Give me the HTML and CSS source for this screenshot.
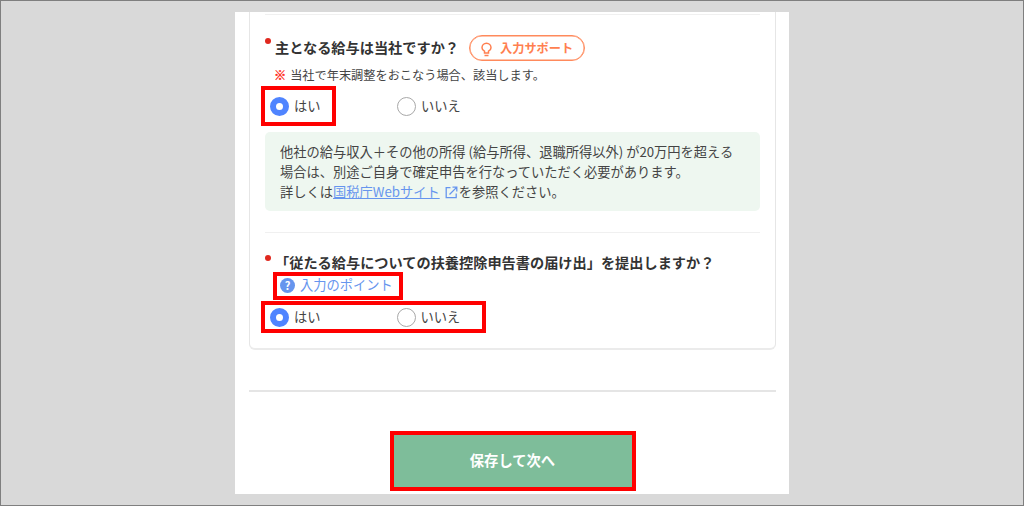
FILE: index.html
```html
<!DOCTYPE html>
<html lang="ja">

<head>
    <meta charset="UTF-8">
    <meta name="viewport" content="width=device-width, initial-scale=1.0">
    <title>年末調整</title>
    <link rel="stylesheet" href="styles.css">
</head>

<body>
    <main class="panel">
        <form id="salary-form">
            <section class="card">
                <hr class="divider first">

                <div class="question">
                    <span class="required"></span>
                    <h2>主となる給与は当社ですか？</h2>
                    <button type="button" class="support">
                        <svg width="11" height="15" viewBox="0 0 11 15" fill="none" stroke="currentColor" stroke-width="1.5">
                            <path d="M3.5 11V9.200C1.900 8.400 1 7.200 1 5.700a4.500 4.500 0 0 1 9 0c0 1.500-.9 2.700-2.500 3.500V11z" />
                            <path d="M3.500 13.500h4" />
                        </svg>
                        <span>入力サポート</span>
                    </button>
                </div>
                <p class="note"><span class="mark">※</span>当社で年末調整をおこなう場合、該当します。</p>
                <div class="radio-row">
                    <div class="highlight yes-only">
                        <label class="radio"><input type="radio" name="main" checked>はい</label>
                    </div>
                    <label class="radio"><input type="radio" name="main">いいえ</label>
                </div>

                <div class="info">
                    <p>他社の給与収入＋その他の所得 (給与所得、退職所得以外) が20万円を超える</p>
                    <p>場合は、別途ご自身で確定申告を行なっていただく必要があります。</p>
                    <p>詳しくは<a href="#">国税庁Webサイト</a><svg class="external" width="13" height="13" viewBox="0 0 13 13" fill="none" stroke="currentColor" stroke-width="1.300"><path d="M5.500 1.700H1.200v10h10V7.500M7.500 1.200h4.300v4.300M11.600 1.400L4.500 8.500" /></svg>を参照ください。</p>
                </div>

                <hr class="divider">

                <div class="question second">
                    <span class="required"></span>
                    <h2>「従たる給与についての扶養控除申告書の届け出」を提出しますか？</h2>
                </div>
                <div class="highlight point">
                    <span class="help">?</span>
                    <a href="#">入力のポイント</a>
                </div>
                <div class="highlight both">
                    <label class="radio"><input type="radio" name="sub" checked>はい</label>
                    <label class="radio"><input type="radio" name="sub">いいえ</label>
                </div>
            </section>

            <hr class="separator">

            <div class="highlight save">
                <button type="submit">保存して次へ</button>
            </div>
        </form>
    </main>
</body>

</html>
```

FILE: styles.css
```css
* {
    margin: 0;
    padding: 0;
    box-sizing: border-box;
}

body {
    height: 100vh;
    padding: 11px 0 0 234px;
    border: 1px solid #7f7f7f;
    background-color: #d9d9d9;
    color: #444444;
    font-family: 'Noto Sans CJK JP', sans-serif;
    font-size: 13.25px;
    overflow: hidden;
}

button,
input {
    font-family: inherit;
}

.panel {
    width: 554px;
    height: 482px;
    padding: 0 13px 0 14px;
    background-color: #ffffff;
}

.card {
    height: 338px;
    padding: 2px 15px 0;
    border: 1px solid #e6e6e6;
    border-top: none;
    border-bottom: 2px solid #ebebeb;
    border-radius: 0 0 6px 6px;
}

.divider {
    height: 1px;
    margin-top: 21px;
    border: none;
    background-color: #f0f0f0;
}

.divider.first {
    margin-top: 0;
}

.question {
    display: flex;
    align-items: center;
    height: 26px;
    margin-top: 20px;
}

.question.second {
    height: 18px;
    margin-top: 21px;
}

.required {
    align-self: flex-start;
    width: 6px;
    height: 6px;
    margin: 3px 4px 0 0;
    border-radius: 50%;
    background-color: #e0281e;
}

.question.second .required {
    margin-top: 1px;
}

h2 {
    padding-bottom: 2px;
    color: #333333;
    font-size: 14.2px;
    line-height: 18px;
    white-space: nowrap;
}

.support {
    display: flex;
    align-items: center;
    gap: 8px;
    width: 116px;
    height: 26px;
    margin-left: 10px;
    padding-left: 11px;
    border: 1px solid #ff8a5c;
    border-radius: 13px;
    background-color: #ffffff;
    box-shadow: inset 0 0 0 0.5px #ff8a5c;
    color: #ff7f50;
    font-size: 12.2px;
    font-weight: bold;
    line-height: 18px;
    white-space: nowrap;
}

.support svg {
    margin-top: 3px;
}

.note {
    margin-top: 4px;
    padding-left: 9px;
    font-size: 12.2px;
    line-height: 20px;
}

.note .mark {
    margin-right: 4px;
    color: #ff2a1a;
    font-weight: bold;
    -webkit-text-stroke: 0.4px #ff2a1a;
}

.highlight {
    display: flex;
    align-items: center;
    border: 4px solid #ff0000;
}

.radio-row {
    display: flex;
    align-items: center;
    gap: 61px;
    height: 40px;
    margin: 1px 0 0 -4px;
}

.yes-only {
    width: 75px;
    height: 40px;
    padding-left: 5px;
}

.radio {
    display: flex;
    align-items: center;
    gap: 5px;
    line-height: 20px;
    white-space: nowrap;
}

.radio input {
    appearance: none;
    width: 19px;
    height: 19px;
    border: 1px solid #a8a8a8;
    border-radius: 50%;
    background-color: #ffffff;
}

.radio input:checked {
    border: 6px solid #4f84ff;
}

.info {
    height: 79px;
    margin-top: 6px;
    padding: 10px 15px;
    border-radius: 5px;
    background-color: #eef7f0;
    line-height: 20px;
    white-space: nowrap;
}

a {
    color: #6695ee;
}

.external {
    margin: 0 1px 0 5px;
    color: #6695ee;
    vertical-align: -2px;
}

.point {
    gap: 5px;
    width: 130px;
    height: 28px;
    margin-left: 8px;
    padding: 0 0 2px 3px;
    line-height: 20px;
}

.point a {
    text-decoration: none;
}

.help {
    width: 15px;
    height: 15px;
    border-radius: 50%;
    background-color: #6695ee;
    color: #ffffff;
    font-size: 11px;
    font-weight: bold;
    line-height: 14px;
    text-align: center;
}

.both {
    gap: 76px;
    width: 225px;
    height: 32px;
    margin: 1px 0 0 -4px;
    padding-left: 5px;
}

.separator {
    height: 2px;
    margin-top: 40px;
    border: none;
    background-color: #e5e5e5;
}

.save {
    width: 246px;
    height: 60px;
    margin: 39px 0 0 141px;
}

.save button {
    width: 100%;
    height: 100%;
    padding: 0 1px 3px 0;
    border: none;
    background-color: #7ebd9a;
    color: #ffffff;
    font-size: 14.3px;
    font-weight: bold;
    cursor: pointer;
}
```
